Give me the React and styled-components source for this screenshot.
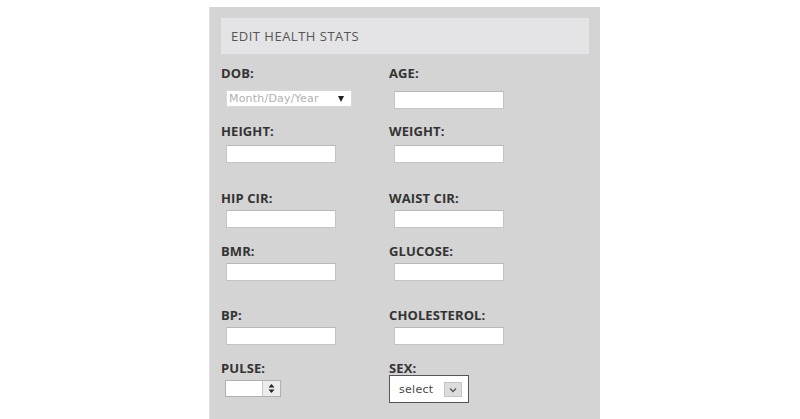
import React from "react";
import styled, { createGlobalStyle } from "styled-components";

const Global = createGlobalStyle`
  html, body { margin: 0; padding: 0; background: #ffffff; }
  body { font-family: "Open Sans", "Liberation Sans", sans-serif; }
  * { box-sizing: border-box; }
`;

const Page = styled.div`
  width: 800px;
  height: 419px;
  overflow: hidden;
  padding: 7px 0 0 209px;
`;

const Panel = styled.div`
  width: 391px;
  height: 420px;
  background: #d4d4d4;
  padding: 11px 11px 0 11px;
  border-left: 1px solid #dedede;
`;

const Header = styled.div`
  height: 36px;
  background: #e4e4e6;
  padding-left: 10px;
  display: flex;
  align-items: center;
  font-size: 13px;
  color: #555;
  letter-spacing: 0.5px;
`;

const Row = styled.div`
  display: grid;
  grid-template-columns: 168px 1fr;
  margin-top: ${(p) => p.$top}px;
`;

const Field = styled.div`
  display: flex;
  flex-direction: column;
  align-items: flex-start;
`;

const Label = styled.div`
  font-weight: 700;
  font-size: 13px;
  line-height: 16px;
  color: #333;
  letter-spacing: 0.1px;
  margin-bottom: ${(p) => p.$gap}px;
`;

const TextInput = styled.input`
  width: 110px;
  height: 18px;
  margin-left: 5px;
  border: 1px solid #c4c4c4;
  border-top-color: #b8b8b8;
  background: #fff;
  padding: 0 3px;
  font-size: 11px;
  outline: none;
`;

const DateSelect = styled.div`
  width: 126px;
  height: 17px;
  margin-left: 5px;
  background: #fff;
  border: 1px solid #d8d8d8;
  display: flex;
  align-items: center;
  justify-content: space-between;
  padding: 0 7px 0 2px;
  font-family: "DejaVu Sans", Verdana, sans-serif;
  font-size: 11px;
  letter-spacing: 0.2px;
  color: #b0b0b0;
`;

const Caret = styled.span`
  width: 0;
  height: 0;
  border-left: 3.5px solid transparent;
  border-right: 3.5px solid transparent;
  border-top: 6px solid #222;
`;

const SpinBox = styled.div`
  display: flex;
  width: 56px;
  height: 17px;
  margin-left: 4px;
  border: 1px solid #b0b0b0;
  background: #fff;
`;

const SpinField = styled.div`
  flex: 1;
`;

const SpinButtons = styled.div`
  width: 18px;
  border-left: 1px solid #c8c8c8;
  background: #ececec;
  display: flex;
  align-items: center;
  justify-content: center;
`;

const SexSelect = styled.div`
  width: 80px;
  height: 28px;
  margin-top: -1px;
  border: 1px solid #555;
  background: #fff;
  display: flex;
  align-items: center;
  justify-content: space-between;
  padding: 0 6px 0 9px;
  font-family: "DejaVu Sans", Verdana, sans-serif;
  font-size: 11px;
  color: #444;
  letter-spacing: 0.3px;
`;

const SexButton = styled.span`
  width: 18px;
  height: 15px;
  background: #dcdcdc;
  border: 1px solid #c4c4c4;
  display: flex;
  align-items: center;
  justify-content: center;
  padding-top: 2px;
`;

export default function App() {
  return (
    <>
      <Global />
      <Page>
        <Panel>
          <Header>EDIT HEALTH STATS</Header>

          <Row $top={11}>
            <Field>
              <Label $gap={9}>DOB:</Label>
              <DateSelect>
                <span>Month/Day/Year</span>
                <Caret />
              </DateSelect>
            </Field>
            <Field>
              <Label $gap={10}>AGE:</Label>
              <TextInput />
            </Field>
          </Row>

          <Row $top={14}>
            <Field>
              <Label $gap={6}>HEIGHT:</Label>
              <TextInput />
            </Field>
            <Field>
              <Label $gap={6}>WEIGHT:</Label>
              <TextInput />
            </Field>
          </Row>

          <Row $top={27}>
            <Field>
              <Label $gap={4}>HIP CIR:</Label>
              <TextInput />
            </Field>
            <Field>
              <Label $gap={4}>WAIST CIR:</Label>
              <TextInput />
            </Field>
          </Row>

          <Row $top={15}>
            <Field>
              <Label $gap={4}>BMR:</Label>
              <TextInput />
            </Field>
            <Field>
              <Label $gap={4}>GLUCOSE:</Label>
              <TextInput />
            </Field>
          </Row>

          <Row $top={26}>
            <Field>
              <Label $gap={4}>BP:</Label>
              <TextInput />
            </Field>
            <Field>
              <Label $gap={4}>CHOLESTEROL:</Label>
              <TextInput />
            </Field>
          </Row>

          <Row $top={15}>
            <Field>
              <Label $gap={4}>PULSE:</Label>
              <SpinBox>
                <SpinField />
                <SpinButtons>
                  <svg width="7" height="11" viewBox="0 0 7 11">
                    <path d="M3.5 1 L6.5 4.5 L0.5 4.5 Z" fill="#222" />
                    <path d="M3.5 10 L6.5 6.5 L0.5 6.5 Z" fill="#222" />
                  </svg>
                </SpinButtons>
              </SpinBox>
            </Field>
            <Field>
              <Label $gap={0}>SEX:</Label>
              <SexSelect>
                <span>select</span>
                <SexButton>
                  <svg width="8" height="6" viewBox="0 0 8 6">
                    <path d="M1 1.5 L4 4.5 L7 1.5" stroke="#555" strokeWidth="1.3" fill="none" />
                  </svg>
                </SexButton>
              </SexSelect>
            </Field>
          </Row>
        </Panel>
      </Page>
    </>
  );
}
